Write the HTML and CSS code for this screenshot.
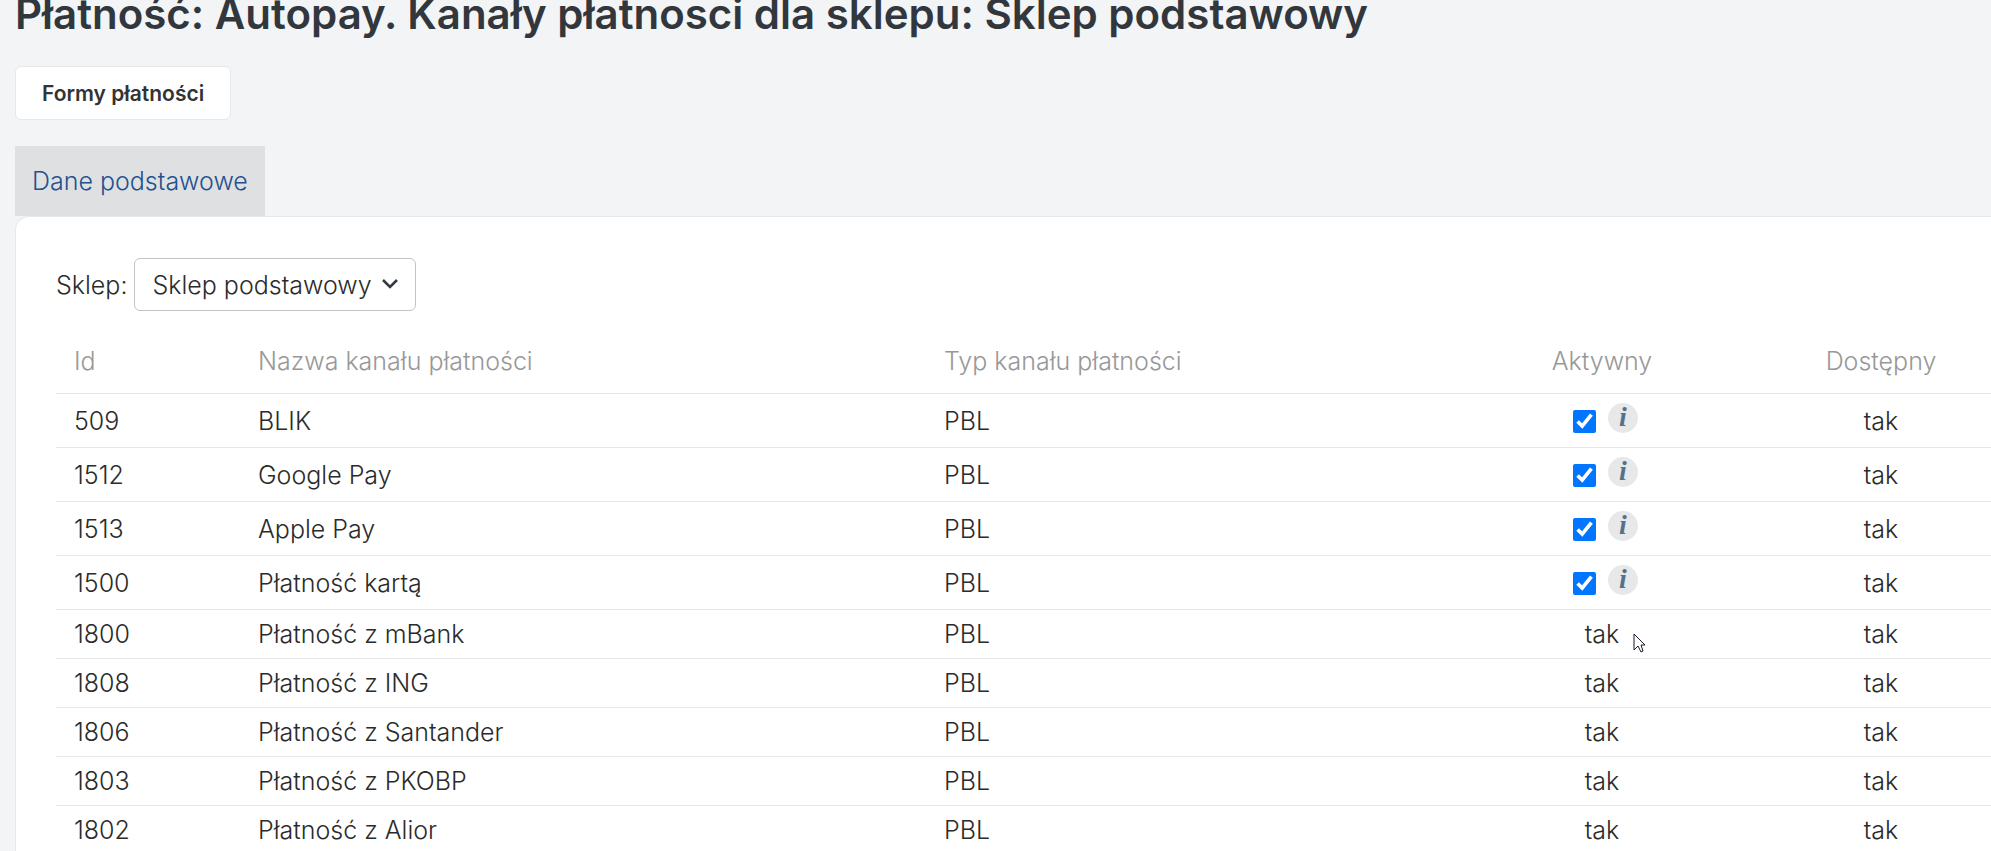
FILE: index.html
```html
<!DOCTYPE html>
<html lang="pl">
<head>
    <meta charset="UTF-8">
    <meta name="viewport" content="width=device-width, initial-scale=1.0">
    <title>Płatność: Autopay</title>

    <link rel="stylesheet" href="styles.css">
</head>
<body>

<h1>Płatność: Autopay. Kanały płatnosci dla sklepu: Sklep podstawowy</h1>

<button type="button" class="btn">Formy płatności</button>

<nav class="tabs">
    <a href="#dane" class="tab">Dane podstawowe</a>
</nav>

<div class="panel" id="dane">
    <div class="shop">
        <label for="sklepSelect">Sklep:</label>
        <div class="select-box">
            <select id="sklepSelect">
                <option selected>Sklep podstawowy</option>
            </select>
            <svg class="chevron" viewBox="0 0 16 10" aria-hidden="true">
                <path d="M1 1l7 7 7-7" fill="none" stroke="#343a40" stroke-width="2.6"/>
            </svg>
        </div>
    </div>

    <table class="channels">
        <colgroup>
            <col class="col-id">
            <col class="col-name">
            <col>
            <col class="col-active">
            <col class="col-available">
        </colgroup>
        <thead>
            <tr>
                <th>Id</th>
                <th>Nazwa kanału płatności</th>
                <th>Typ kanału płatności</th>
                <th class="center" id="aktywny">Aktywny</th>
                <th class="center">Dostępny</th>
            </tr>
        </thead>
        <tbody>
            <tr class="editable">
                <td>509</td>
                <td id="kanal509">BLIK</td>
                <td>PBL</td>
                <td><div class="active"><input type="checkbox" aria-labelledby="aktywny kanal509" checked><span class="info">i</span></div></td>
                <td class="center">tak</td>
            </tr>
            <tr class="editable">
                <td>1512</td>
                <td id="kanal1512">Google Pay</td>
                <td>PBL</td>
                <td><div class="active"><input type="checkbox" aria-labelledby="aktywny kanal1512" checked><span class="info">i</span></div></td>
                <td class="center">tak</td>
            </tr>
            <tr class="editable">
                <td>1513</td>
                <td id="kanal1513">Apple Pay</td>
                <td>PBL</td>
                <td><div class="active"><input type="checkbox" aria-labelledby="aktywny kanal1513" checked><span class="info">i</span></div></td>
                <td class="center">tak</td>
            </tr>
            <tr class="editable">
                <td>1500</td>
                <td id="kanal1500">Płatność kartą</td>
                <td>PBL</td>
                <td><div class="active"><input type="checkbox" aria-labelledby="aktywny kanal1500" checked><span class="info">i</span></div></td>
                <td class="center">tak</td>
            </tr>
            <tr>
                <td>1800</td>
                <td>Płatność z mBank</td>
                <td>PBL</td>
                <td class="center">
                    <span class="pointed">tak<svg class="cursor" viewBox="0 0 13 20" aria-hidden="true"><path d="M1 1v16l4-4 3 6 2-1-2-6h4z" fill="#fff" stroke="#1b1b2b" stroke-width="1"/></svg></span>
                </td>
                <td class="center">tak</td>
            </tr>
            <tr>
                <td>1808</td>
                <td>Płatność z ING</td>
                <td>PBL</td>
                <td class="center">tak</td>
                <td class="center">tak</td>
            </tr>
            <tr>
                <td>1806</td>
                <td>Płatność z Santander</td>
                <td>PBL</td>
                <td class="center">tak</td>
                <td class="center">tak</td>
            </tr>
            <tr>
                <td>1803</td>
                <td>Płatność z PKOBP</td>
                <td>PBL</td>
                <td class="center">tak</td>
                <td class="center">tak</td>
            </tr>
            <tr>
                <td>1802</td>
                <td>Płatność z Alior</td>
                <td>PBL</td>
                <td class="center">tak</td>
                <td class="center">tak</td>
            </tr>
        </tbody>
    </table>
</div>

</body>
</html>
```

FILE: styles.css
```css
html {
    overflow: hidden;
}

body {
    margin: 0;
    padding-left: 15px;
    background-color: #f3f4f6;
    color: #2b2b2b;
    font-family: Inter, sans-serif;
    font-size: 25px;
    font-weight: 300;
    line-height: 32px;
}

h1 {
    margin: -10px 0 28px;
    color: #32373d;
    font-size: 42px;
    font-weight: 600;
    line-height: 48px;
}

.btn {
    display: block;
    height: 54px;
    padding: 0 26px;
    background-color: #ffffff;
    border: 1px solid #e6e8eb;
    border-radius: 6px;
    color: #333333;
    font-family: inherit;
    font-size: 21px;
    font-weight: 600;
    cursor: pointer;
}

.tabs {
    display: flex;
    margin-top: 26px;
}

.tab {
    padding: 19px 17px;
    background-color: #dfe0e2;
    color: #23528f;
    text-decoration: none;
}

.panel {
    padding: 41px 0 0 40px;
    background-color: #ffffff;
    border: 1px solid #e6e8eb;
    border-right: none;
    border-radius: 14px 0 0 0;
}

.shop {
    display: flex;
    align-items: center;
    gap: 7px;
}

.select-box {
    position: relative;
}

.select-box select {
    appearance: none;
    height: 53px;
    padding: 0 43px 0 17px;
    background-color: #ffffff;
    border: 1px solid #bfc4c9;
    border-radius: 6px;
    color: inherit;
    font: inherit;
}

.chevron {
    position: absolute;
    top: 21px;
    right: 18px;
    width: 16px;
    height: 10px;
    pointer-events: none;
}

.channels {
    width: 100%;
    margin-top: 19px;
    table-layout: fixed;
    border-collapse: collapse;
}

.col-id {
    width: 184px;
}

.col-name {
    width: 686px;
}

.col-active {
    width: 338px;
}

.col-available {
    width: 220px;
}

.channels th {
    height: 61px;
    padding: 0 18px 2px;
    color: #989898;
    font-weight: 300;
    text-align: left;
}

.channels td {
    height: 48px;
    padding: 0 18px;
    border-top: 1px solid #e6e7e8;
}

.channels .editable td {
    height: 53px;
}

.channels .center {
    text-align: center;
}

.active {
    display: flex;
    justify-content: center;
    align-items: flex-end;
    gap: 12px;
    margin-bottom: 5px;
}

.active input {
    width: 23px;
    height: 23px;
    margin: 0 0 0 7px;
}

/* kółko z literą "i" */
.info {
    width: 30px;
    height: 30px;
    background-color: #e7e8ea;
    border-radius: 50%;
    color: #55718a;
    font: italic bold 28px/28px "Liberation Serif", serif;
    text-align: center;
}

.pointed {
    position: relative;
}

.cursor {
    position: absolute;
    top: 14px;
    left: 48px;
    width: 13px;
    height: 20px;
}
```
